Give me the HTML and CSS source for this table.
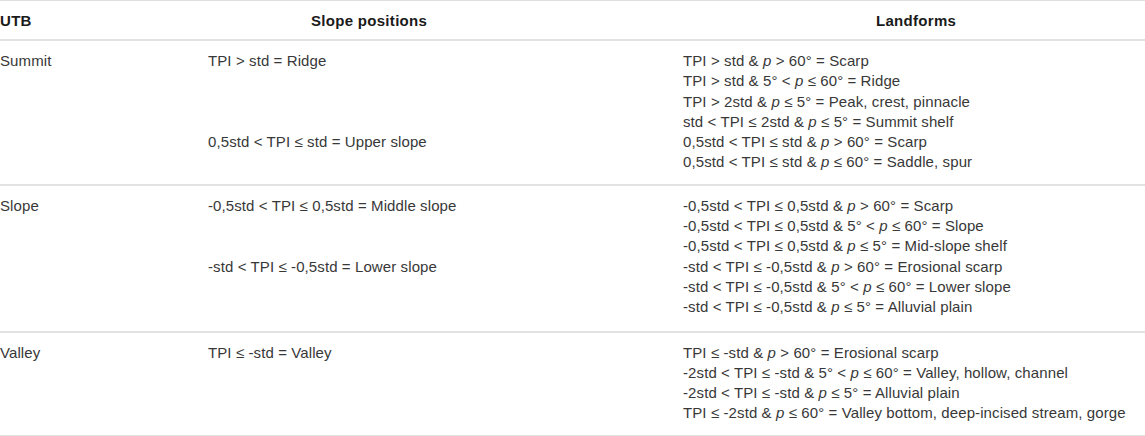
FILE: index.html
```html
<!DOCTYPE html>
<html>
<head>
<meta charset="utf-8">
<link rel="stylesheet" href="styles.css">
</head>
<body>
<div class="table">
  <div class="row head">
    <div class="cell h1">UTB</div>
    <div class="cell h2">Slope positions</div>
    <div class="cell h3">Landforms</div>
  </div>
  <div class="row body">
    <div class="cell c1"><div class="ln">Summit</div></div>
    <div class="cell c2">
      <div class="ln">TPI &gt; std = Ridge</div>
      <div class="ln"></div><div class="ln"></div><div class="ln"></div>
      <div class="ln">0,5std &lt; TPI ≤ std = Upper slope</div>
    </div>
    <div class="cell c3">
      <div class="ln">TPI &gt; std &amp; <i>p</i> &gt; 60° = Scarp</div>
      <div class="ln">TPI &gt; std &amp; 5° &lt; <i>p</i> ≤ 60° = Ridge</div>
      <div class="ln">TPI &gt; 2std &amp; <i>p</i> ≤ 5° = Peak, crest, pinnacle</div>
      <div class="ln">std &lt; TPI ≤ 2std &amp; <i>p</i> ≤ 5° = Summit shelf</div>
      <div class="ln">0,5std &lt; TPI ≤ std &amp; <i>p</i> &gt; 60° = Scarp</div>
      <div class="ln">0,5std &lt; TPI ≤ std &amp; <i>p</i> ≤ 60° = Saddle, spur</div>
    </div>
  </div>
  <div class="row body">
    <div class="cell c1"><div class="ln">Slope</div></div>
    <div class="cell c2">
      <div class="ln">-0,5std &lt; TPI ≤ 0,5std = Middle slope</div>
      <div class="ln"></div><div class="ln"></div>
      <div class="ln">-std &lt; TPI ≤ -0,5std = Lower slope</div>
    </div>
    <div class="cell c3 tall">
      <div class="ln">-0,5std &lt; TPI ≤ 0,5std &amp; <i>p</i> &gt; 60° = Scarp</div>
      <div class="ln">-0,5std &lt; TPI ≤ 0,5std &amp; 5° &lt; <i>p</i> ≤ 60° = Slope</div>
      <div class="ln">-0,5std &lt; TPI ≤ 0,5std &amp; <i>p</i> ≤ 5° = Mid-slope shelf</div>
      <div class="ln">-std &lt; TPI ≤ -0,5std &amp; <i>p</i> &gt; 60° = Erosional scarp</div>
      <div class="ln">-std &lt; TPI ≤ -0,5std &amp; 5° &lt; <i>p</i> ≤ 60° = Lower slope</div>
      <div class="ln">-std &lt; TPI ≤ -0,5std &amp; <i>p</i> ≤ 5° = Alluvial plain</div>
    </div>
  </div>
  <div class="row body">
    <div class="cell c1"><div class="ln">Valley</div></div>
    <div class="cell c2">
      <div class="ln">TPI ≤ -std = Valley</div>
    </div>
    <div class="cell c3">
      <div class="ln">TPI ≤ -std &amp; <i>p</i> &gt; 60° = Erosional scarp</div>
      <div class="ln">-2std &lt; TPI ≤ -std &amp; 5° &lt; <i>p</i> ≤ 60° = Valley, hollow, channel</div>
      <div class="ln">-2std &lt; TPI ≤ -std &amp; <i>p</i> ≤ 5° = Alluvial plain</div>
      <div class="ln">TPI ≤ -2std &amp; <i>p</i> ≤ 60° = Valley bottom, deep-incised stream, gorge</div>
    </div>
  </div>
</div>
</body>
</html>
```

FILE: styles.css
```css
html, body {
  margin: 0;
  padding: 0;
  background: #ffffff;
}

body {
  font-family: "Liberation Sans", Arial, sans-serif;
  font-size: 15px;
  color: #383838;
  width: 1145px;
  overflow: hidden;
}

.table {
  border-top: 1px solid #dedede;
}

.row {
  display: grid;
  grid-template-columns: 208px 475px 1fr;
  border-bottom: 2px solid #e2e2e2;
}

.head {
  height: 38px;
  align-items: center;
  font-weight: bold;
  color: #1a1a1a;
  letter-spacing: 0.3px;
}

.h2 {
  padding-left: 103px;
}

.h3 {
  padding-left: 193px;
}

.body .cell {
  padding-top: 10px;
  padding-bottom: 11px;
  letter-spacing: 0.1px;
}

.body .tall {
  padding-bottom: 13px;
}

.ln {
  line-height: 20.3px;
  height: 20.3px;
  white-space: nowrap;
}

i {
  font-style: italic;
}
```
